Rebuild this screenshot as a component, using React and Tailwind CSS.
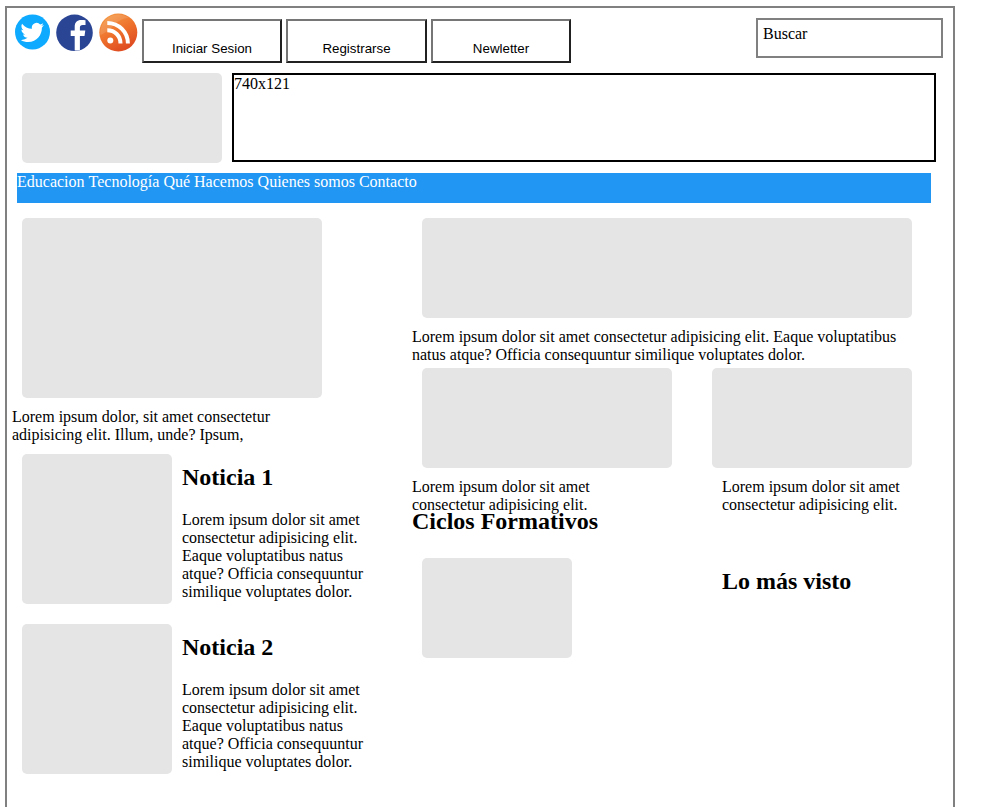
const Box = ({ className }) => <div className={`shrink-0 rounded-[5px] bg-[#e5e5e5] ${className}`} />;

const Heading = ({ className = '', children }) => (
  <h2 className={`text-2xl leading-[27px] font-bold whitespace-nowrap ${className}`}>{children}</h2>
);

const Text = ({ lines, className = '' }) => (
  <p className={`whitespace-nowrap ${className}`}>
    {lines.map((line) => (
      <span key={line} className="block">{line}</span>
    ))}
  </p>
);

const Button = ({ className, children }) => (
  <button
    className={`h-11 shrink-0 border-2 border-t-[#767676] border-l-[#767676] border-r-[#212121] border-b-[#212121] bg-white pt-[15px] text-center font-['Liberation_Sans',Arial,sans-serif] text-[13.333px] leading-[15px] ${className}`}
  >
    {children}
  </button>
);

const Twitter = () => (
  <svg className="mt-[6px] ml-2 size-9" viewBox="0 0 36 36">
    <circle cx="17.5" cy="18" r="17.5" fill="#0daaff" />
    <path
      fill="#fff"
      transform="translate(5.8 6.3) scale(.98)"
      d="M23.6 4.9a9 9 0 0 1-2.8.8 4.900 4.900 0 0 0 2.100-2.700 10 10 0 0 1-3.100 1.200 4.900 4.900 0 0 0-8.400 4.500A14 14 0 0 1 1.300 3.500a4.900 4.900 0 0 0 1.500 6.600 4.900 4.900 0 0 1-2.200-.6c0 2.400 1.700 4.400 4 4.900a5 5 0 0 1-2.300.1 4.900 4.900 0 0 0 4.600 3.400A10 10 0 0 1 0 20c2.200 1.400 4.800 2.200 7.500 2.200 9.100 0 14-7.500 14-14v-.7a10 10 0 0 0 2.100-2.600z"
    />
  </svg>
);

const Facebook = () => (
  <svg className="mt-[6px] ml-[5px] h-[38px] w-[37px]" viewBox="0 0 37 38">
    <circle cx="18.500" cy="18.800" r="18.300" fill="#2b4595" />
    <path
      fill="#fff"
      d="M18.700 36.500V22h-4v-5.500h4v-3.700c0-4.600 2.400-6.800 6.500-6.800 1.700 0 3 .1 4.300.3v4.600h-2.700c-2.300 0-2.900 1-2.900 2.700v2.900h5.400l-.8 5.500h-4.600v14c-1.600.6-3.500.7-5.200.5z"
    />
  </svg>
);

const Rss = () => (
  <svg className="mt-[5px] ml-[6px] size-[39px]" viewBox="0 0 39 39">
    <defs>
      <linearGradient id="rss" x1=".2" y1="0" x2=".75" y2="1">
        <stop offset="0" stopColor="#f49a45" />
        <stop offset=".5" stopColor="#ee702b" />
        <stop offset="1" stopColor="#dc451f" />
      </linearGradient>
    </defs>
    <circle cx="19.300" cy="19.500" r="19" fill="url(#rss)" />
    <path d="M1.500 22A18 18 0 0 1 30 5C17 5 14 17 1.500 22z" fill="#fff" opacity=".12" />
    <circle cx="11.300" cy="27.500" r="3" fill="#fff" />
    <path d="M8.300 17.200c7.500 0 13.200 5.700 13.200 13.200M8.300 9.900c11.500 0 20.600 9.100 20.600 20.600" fill="none" stroke="#fff" strokeWidth="4" />
  </svg>
);

const Noticia = ({ title }) => (
  <article className="flex h-[150px]">
    <Box className="ml-[10px] size-[150px]" />
    <div className="ml-[10px] pt-[10px]">
      <Heading>{title}</Heading>
      <Text
        className="mt-5"
        lines={[
          'Lorem ipsum dolor sit amet',
          'consectetur adipisicing elit.',
          'Eaque voluptatibus natus',
          'atque? Officia consequuntur',
          'similique voluptates dolor.',
        ]}
      />
    </div>
  </article>
);

export default function App() {
  return (
    <div className="h-[807px] overflow-hidden bg-white pt-[6px] pl-[5px] font-['Liberation_Serif','Times_New_Roman',serif] text-base leading-[18px] text-black">
      <div className="h-[900px] w-[950px] border-2 border-[#808080]">
        <header className="flex h-[65px] items-start">
          <Twitter />
          <Facebook />
          <Rss />
          <div className="mt-[11px] ml-1 flex gap-1">
            <Button className="w-[140px]">Iniciar Sesion</Button>
            <Button className="w-[141px]">Registrarse</Button>
            <Button className="w-[140px]">Newletter</Button>
          </div>
          <div className="mt-[10px] mr-[10px] ml-auto h-10 w-[187px] border-2 border-[#808080] pt-[5px] pl-[5px]">Buscar</div>
        </header>
        <div className="flex gap-[10px] pl-[15px]">
          <Box className="h-[90px] w-[200px]" />
          <div className="h-[89px] w-[704px] border-2 border-black">740x121</div>
        </div>
        <nav className="mt-[10px] ml-[10px] flex h-[30px] w-[914px] gap-1 bg-[#2196f3] text-white">
          <a>Educacion</a>
          <a>Tecnología</a>
          <a>Qué Hacemos</a>
          <a>Quienes somos</a>
          <a>Contacto</a>
        </nav>
        <main className="mt-[15px] flex pl-[5px]">
          <section className="w-[400px]">
            <Box className="ml-[10px] h-[180px] w-[300px]" />
            <Text className="mt-[10px] mb-[10px]" lines={['Lorem ipsum dolor, sit amet consectetur', 'adipisicing elit. Illum, unde? Ipsum,']} />
            <div className="flex flex-col gap-5">
              <Noticia title="Noticia 1" />
              <Noticia title="Noticia 2" />
            </div>
          </section>
          <section>
            <Box className="ml-[10px] h-[100px] w-[490px]" />
            <Text
              className="mt-[10px]"
              lines={[
                'Lorem ipsum dolor sit amet consectetur adipisicing elit. Eaque voluptatibus',
                'natus atque? Officia consequuntur similique voluptates dolor.',
              ]}
            />
            <div className="mt-1 flex">
              <div className="w-[300px]">
                <Box className="ml-[10px] h-[100px] w-[250px]" />
                <Text className="mt-[10px]" lines={['Lorem ipsum dolor sit amet', 'consectetur adipisicing elit.']} />
                <Heading className="-mt-[6px]">Ciclos Formativos</Heading>
                <Box className="mt-[23px] ml-[10px] h-[100px] w-[150px]" />
              </div>
              <div>
                <Box className="h-[100px] w-[200px]" />
                <Text className="mt-[10px] ml-[10px]" lines={['Lorem ipsum dolor sit amet', 'consectetur adipisicing elit.']} />
                <Heading className="mt-[54px] ml-[10px]">Lo más visto</Heading>
              </div>
            </div>
          </section>
        </main>
      </div>
    </div>
  );
}
